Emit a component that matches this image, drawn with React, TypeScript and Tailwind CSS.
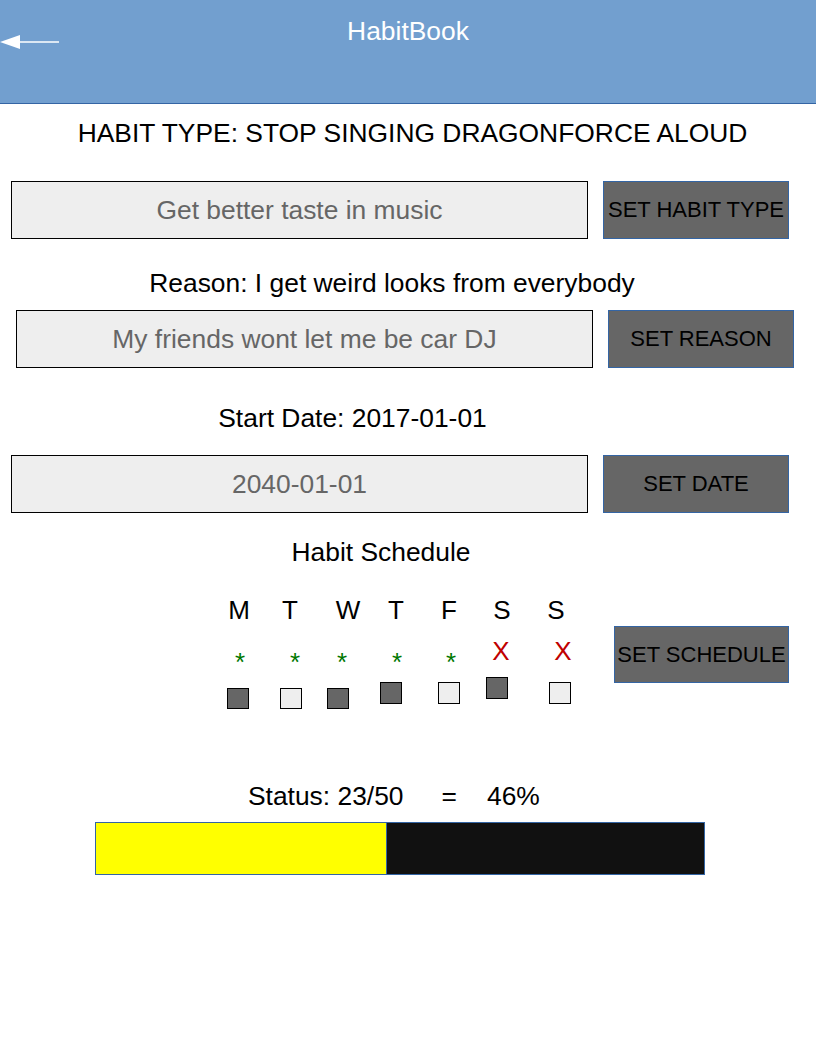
const inputCls =
    'h-[58px] w-[577px] border border-black bg-[#eeeeee] text-center text-[26.4px] text-[#666666] placeholder:text-[#666666] outline-none';
const buttonCls =
    'h-[58px] w-[186px] border border-[#3465a4] bg-[#666666] text-center text-[22px] leading-none text-black';

function Row({ placeholder, button, left }: { placeholder: string; button: string; left: string }) {
    return (
        <div className={`flex gap-[15px] ${left}`}>
            <input className={inputCls} placeholder={placeholder} type="text" />
            <button className={buttonCls}>{button}</button>
        </div>
    );
}

function Square({ dark, cls }: { dark?: boolean; cls: string }) {
    return (
        <div
            className={`w-[22px] border-[1.5px] border-black ${dark ? 'bg-[#666666]' : 'bg-[#eeeeee]'} ${cls}`}
        />
    );
}

export default function App() {
    return (
        <div className="min-h-[1056px] w-[816px] bg-white text-black" style={{ fontFamily: '"Liberation Sans", Arial, sans-serif' }}>
            {/* header */}
            <div className="grid h-[104px] grid-cols-[1fr_auto_1fr] border-b border-[#3465a4] bg-[#729fcf]">
                <div className="mt-[34px]">
                    <svg width="60" height="16" viewBox="0 0 60 16">
                        <polygon points="0,8 20,1 20,15" fill="white" />
                        <line x1="19" y1="8" x2="59" y2="8" stroke="white" strokeWidth="1.5" />
                    </svg>
                </div>
                <div className="mt-[16px] text-[26.4px] leading-[30px] text-white">HabitBook</div>
                <div />
            </div>

            <div className="mt-[14px] pl-[9px] text-center text-[26.4px] leading-[30px]">
                HABIT TYPE: STOP SINGING DRAGONFORCE ALOUD
            </div>

            <div className="mt-[33px]">
                <Row placeholder="Get better taste in music" button="SET HABIT TYPE" left="ml-[11px]" />
            </div>

            <div className="mt-[29px] pr-[32px] text-center text-[26.4px] leading-[30px]">
                Reason: I get weird looks from everybody
            </div>

            <div className="mt-[12px]">
                <Row placeholder="My friends wont let me be car DJ" button="SET REASON" left="ml-[16px]" />
            </div>

            <div className="mt-[35px] pr-[111px] text-center text-[26.4px] leading-[30px]">Start Date: 2017-01-01</div>

            <div className="mt-[22px]">
                <Row placeholder="2040-01-01" button="SET DATE" left="ml-[11px]" />
            </div>

            <div className="mt-[24px] pr-[54px] text-center text-[26.4px] leading-[30px]">Habit Schedule</div>

            {/* schedule */}
            <div className="mt-[28px] flex">
                <div className="w-[614px]">
                    <div className="flex h-[30px] text-[26px] leading-[30px]">
                        <span className="ml-[219px] w-[40px] text-center">M</span>
                        <span className="ml-[11px] w-[40px] text-center">T</span>
                        <span className="ml-[18px] w-[40px] text-center">W</span>
                        <span className="ml-[8px] w-[40px] text-center">T</span>
                        <span className="ml-[13px] w-[40px] text-center">F</span>
                        <span className="ml-[13px] w-[40px] text-center">S</span>
                        <span className="ml-[14px] w-[40px] text-center">S</span>
                    </div>
                    <div className="mt-[11px] flex h-[30px] items-start text-[26px] leading-[30px]">
                        <span className="ml-[220px] mt-[11px] w-[40px] text-center text-[#007700]">*</span>
                        <span className="ml-[15px] mt-[11px] w-[40px] text-center text-[#007700]">*</span>
                        <span className="ml-[7px] mt-[11px] w-[40px] text-center text-[#007700]">*</span>
                        <span className="ml-[15px] mt-[11px] w-[40px] text-center text-[#007700]">*</span>
                        <span className="ml-[14px] mt-[11px] w-[40px] text-center text-[#007700]">*</span>
                        <span className="ml-[10px] w-[40px] text-center text-[#c00000]">X</span>
                        <span className="ml-[22px] w-[40px] text-center text-[#c00000]">X</span>
                    </div>
                    <div className="mt-[11px] flex h-[32px] items-start">
                        <Square dark cls="ml-[227px] mt-[11px] h-[21px]" />
                        <Square cls="ml-[31px] mt-[11px] h-[21px]" />
                        <Square dark cls="ml-[25px] mt-[11px] h-[21px]" />
                        <Square dark cls="ml-[31px] mt-[5px] h-[22px]" />
                        <Square cls="ml-[36px] mt-[5px] h-[22px]" />
                        <Square dark cls="ml-[26px] h-[22px]" />
                        <Square cls="ml-[41px] mt-[5px] h-[22px]" />
                    </div>
                </div>
                <button className="mt-[31px] h-[57px] w-[175px] border border-[#3465a4] bg-[#666666] text-center text-[22px] leading-none text-black">
                    SET SCHEDULE
                </button>
            </div>

            {/* status */}
            <div className="mt-[72px] flex pl-[248px] text-[26.4px] leading-[30px]">
                <span>Status: 23/50</span>
                <span className="ml-[38px]">=</span>
                <span className="ml-[30px]">46%</span>
            </div>

            <div className="ml-[95px] mt-[11px] flex h-[53px] w-[610px] border border-[#3465a4]">
                <div className="w-[290px] bg-[#ffff00]" />
                <div className="flex-1 border-l border-[#3465a4] bg-[#111111]" />
            </div>
        </div>
    );
}
